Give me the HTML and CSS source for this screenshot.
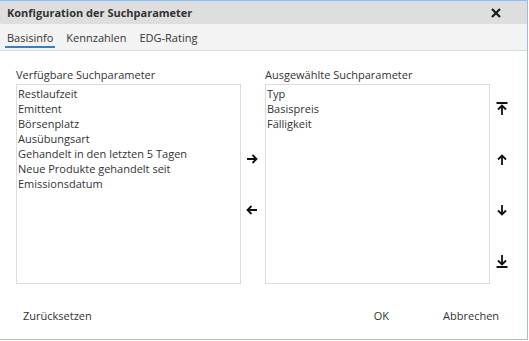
FILE: index.html
```html
<!DOCTYPE html>
<html lang="de">
<head>
  <meta charset="UTF-8">
  <title>Konfiguration der Suchparameter</title>
  <link rel="stylesheet" href="styles.css">
</head>
<body>

  <div class="dialog">
    <div class="title-bar">
      <span class="title">Konfiguration der Suchparameter</span>
      <svg class="close" width="10" height="10" viewBox="0 0 10 10">
        <path d="M1 1 L9 9 M9 1 L1 9" stroke="#1a1a1a" stroke-width="2.2"/>
      </svg>
    </div>

    <div class="tabs">
      <span class="tab active">Basisinfo</span>
      <span class="tab">Kennzahlen</span>
      <span class="tab">EDG-Rating</span>
    </div>

    <div class="content">
      <div class="column">
        <div class="list-label">Verfügbare Suchparameter</div>
        <div class="list">
          <div>Restlaufzeit</div>
          <div>Emittent</div>
          <div>Börsenplatz</div>
          <div>Ausübungsart</div>
          <div>Gehandelt in den letzten 5 Tagen</div>
          <div>Neue Produkte gehandelt seit</div>
          <div>Emissionsdatum</div>
        </div>
      </div>

      <div class="arrows middle">
        <svg width="12" height="12" viewBox="0 0 12 12">
          <path d="M1 6 H10.5 M6.5 2 L10.5 6 L6.5 10" fill="none" stroke="#111" stroke-width="1.8"/>
        </svg>
        <svg width="12" height="12" viewBox="0 0 12 12">
          <path d="M11 6 H1.5 M5.5 2 L1.5 6 L5.5 10" fill="none" stroke="#111" stroke-width="1.8"/>
        </svg>
      </div>

      <div class="column">
        <div class="list-label">Ausgewählte Suchparameter</div>
        <div class="list">
          <div>Typ</div>
          <div>Basispreis</div>
          <div>Fälligkeit</div>
        </div>
      </div>

      <div class="arrows side">
        <svg width="12" height="13" viewBox="0 0 12 13">
          <path d="M0.5 1 H11.5 M6 13 V3.5 M2 7.5 L6 3.5 L10 7.5" fill="none" stroke="#111" stroke-width="1.8"/>
        </svg>
        <svg width="12" height="12" viewBox="0 0 12 12">
          <path d="M6 11 V1.5 M2 5.5 L6 1.5 L10 5.5" fill="none" stroke="#111" stroke-width="1.8"/>
        </svg>
        <svg width="12" height="12" viewBox="0 0 12 12">
          <path d="M6 1 V10.5 M2 6.5 L6 10.5 L10 6.5" fill="none" stroke="#111" stroke-width="1.8"/>
        </svg>
        <svg width="12" height="13" viewBox="0 0 12 13">
          <path d="M0.5 12 H11.5 M6 0 V9.5 M2 5.5 L6 9.5 L10 5.5" fill="none" stroke="#111" stroke-width="1.8"/>
        </svg>
      </div>
    </div>

    <div class="footer">
      <span class="button reset">Zurücksetzen</span>
      <span class="button ok">OK</span>
      <span class="button cancel">Abbrechen</span>
    </div>
  </div>

</body>
</html>
```

FILE: styles.css
```css
body {
  margin: 0;
  background-color: #fff;
  font-family: "Open Sans", sans-serif;
  font-size: 11px;
  color: #333;
}
.dialog {
  width: 527px;
  height: 338px;
  border-top: 1px solid #9dbde0;
  border-right: 1px solid #9dbde0;
  border-bottom: 1px solid #9dbde0;
  display: flex;
  flex-direction: column;
  overflow: hidden;
}
.title-bar {
  flex-shrink: 0;
  height: 23px;
  background-color: #dedede;
  display: flex;
  align-items: center;
  justify-content: space-between;
  padding: 0 26px 0 7px;
}
.title {
  font-weight: bold;
  font-size: 11px;
  color: #333;
}
.tabs {
  flex-shrink: 0;
  height: 26px;
  background-color: #f3f3f3;
  border-bottom: 1px solid #dcdcdc;
  display: flex;
  align-items: flex-end;
  padding-left: 5px;
}
.tab {
  padding: 0 2px 1px 2px;
  margin-right: 9px;
  color: #333;
  border-bottom: 2px solid transparent;
  margin-bottom: 2px;
}
.tab.active {
  border-bottom-color: #3b7fb6;
}
.content {
  flex-shrink: 0;
  display: flex;
  padding: 16px 0 0 16px;
}
.column {
  width: 224px;
}
.list-label {
  height: 17px;
  line-height: 15px;
  color: #333;
}
.list {
  height: 197px;
  border: 1px solid #dcdcdc;
  padding: 1px 0 0 1px;
  line-height: 15px;
  width: 222px;
}
.arrows {
  display: flex;
  flex-direction: column;
  align-items: center;
  margin-top: 17px;
}
.arrows.middle {
  width: 23px;
  margin-right: 2px;
  padding-top: 69px;
  gap: 39px;
}
.arrows.side {
  width: 26px;
  padding-top: 18px;
  gap: 38.5px;
}
.footer {
  flex-shrink: 0;
  display: flex;
  align-items: center;
  line-height: 15px;
  padding: 24px 0 0 23px;
}
.button {
  color: #333;
}
.ok {
  margin-left: 282px;
}
.cancel {
  margin-left: 54px;
}
```
